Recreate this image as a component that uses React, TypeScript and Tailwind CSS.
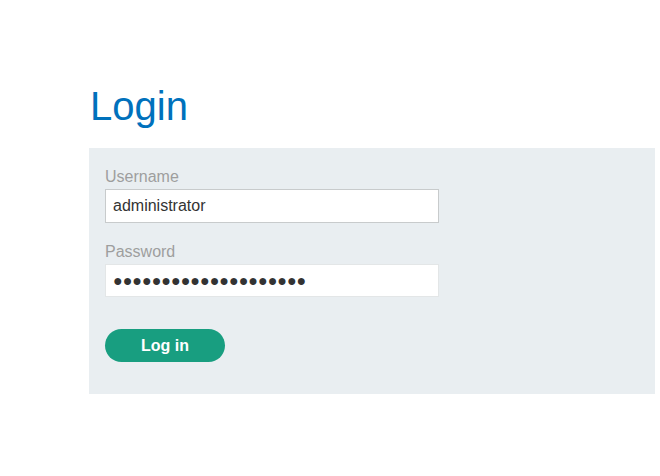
import React from "react";

export default function App() {
  return (
    <div
      className="w-[660px] h-[476px] bg-white overflow-hidden"
      style={{ fontFamily: '"Liberation Sans", Arial, sans-serif' }}
    >
      <div className="pt-[83px] pl-[89px] pr-[5px]">
        <h1 className="text-[40px] leading-[46px] font-normal text-[#0071bc] pl-[1px]">Login</h1>
        <div className="mt-[19px] bg-[#e9eef1] pt-[20px] pb-[32px] pl-[16px]">
          <div className="text-[16px] leading-[18px] text-[#9e9e9e]">Username</div>
          <input
            readOnly
            defaultValue="administrator"
            className="mt-[3px] block w-[334px] h-[34px] bg-white border border-[#c8cbcc] px-[7px] text-[16px] text-[#333] outline-none"
            style={{ fontFamily: '"Liberation Sans", Arial, sans-serif' }}
          />
          <div className="mt-[20px] text-[16px] leading-[18px] text-[#9e9e9e]">Password</div>
          <input
            readOnly
            defaultValue={"●".repeat(20)}
            className="mt-[3px] block w-[334px] h-[33px] bg-white border border-[#e3e6e7] px-[7px] text-[16px] text-[#333] outline-none"
            style={{ fontFamily: '"Liberation Sans", Arial, sans-serif' }}
          />
          <button className="mt-[32px] block w-[120px] h-[33px] rounded-full bg-[#189e80] text-white font-bold text-[16px]">
            Log in
          </button>
        </div>
      </div>
    </div>
  );
}
